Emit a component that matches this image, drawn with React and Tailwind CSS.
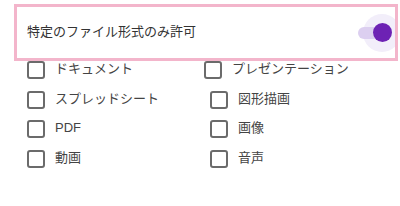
import React from "react";

function Box() {
  return (
    <div className="w-[18px] h-[18px] shrink-0 rounded-[3px] border-2 border-[#6b6b6b]" />
  );
}

function Item({ label, shift }) {
  return (
    <div className={`flex items-center h-[18px] ${shift ? "ml-[6px]" : ""}`}>
      <Box />
      <span className="ml-[10px] text-[13px] leading-none text-[#444] -mt-[3px]">{label}</span>
    </div>
  );
}

export default function App() {
  return (
    <div
      className="w-[400px] h-[206px] bg-white overflow-hidden"
      style={{ fontFamily: '"Liberation Sans", "Noto Sans CJK JP", sans-serif' }}
    >
      <div className="pt-[4px] pl-[14px] pr-[2px]">
        <div className="h-[57px] border-[3px] border-[#f3b5cb] flex items-center pl-[10px] overflow-hidden">
          <span className="text-[13px] text-[#333] -mt-[2px]">特定のファイル形式のみ許可</span>
          <div className="ml-auto mr-[-6px] relative w-[38px] h-[38px] shrink-0 flex items-center justify-center">
            <div className="absolute inset-0 rounded-full bg-[#f2eefa]" />
            <div className="absolute left-[-5px] top-[13px] w-[30px] h-[12px] rounded-full bg-[#dccff0]" />
            <div className="relative w-[19px] h-[19px] rounded-full bg-[#6d22b4]" />
          </div>
        </div>
      </div>
      <div className="flex">
        <div className="pl-[27px] w-[204px] flex flex-col gap-[11.6px]">
          <Item label="ドキュメント" />
          <Item label="スプレッドシート" />
          <Item label="PDF" />
          <Item label="動画" />
        </div>
        <div className="flex flex-col gap-[11.6px]">
          <Item label="プレゼンテーション" />
          <Item label="図形描画" shift />
          <Item label="画像" shift />
          <Item label="音声" shift />
        </div>
      </div>
    </div>
  );
}
